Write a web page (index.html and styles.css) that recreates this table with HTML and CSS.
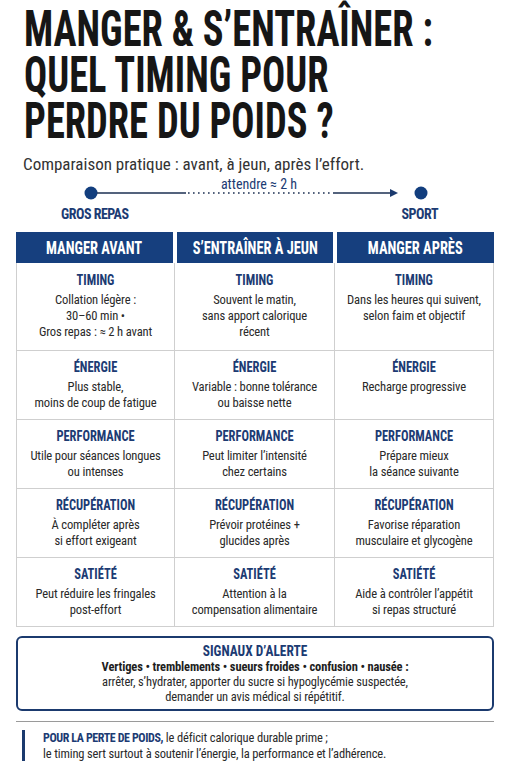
FILE: index.html
```html
<!DOCTYPE html>
<html lang="fr">
<head>
  <meta charset="UTF-8" />
  <title>Manger &amp; s’entraîner</title>
  <link rel="stylesheet" href="styles.css">
</head>
<body>

<div class="page">
  <h1 class="title">MANGER &amp; S’ENTRAÎNER :<br>QUEL TIMING POUR<br>PERDRE DU POIDS ?</h1>
  <p class="lead">Comparaison pratique : avant, à jeun, après l’effort.</p>

  <div class="timeline">
    <p class="tl-note">attendre ≈ 2 h</p>
    <svg class="tl-track" width="344" height="14" viewBox="0 0 344 14">
      <circle cx="7" cy="7" r="6.5" fill="#123e7e" />
      <line x1="13" y1="7" x2="102" y2="7" stroke="#1b2f52" stroke-width="1.6" />
      <line x1="104" y1="7" x2="248" y2="7" stroke="#1b2f52" stroke-width="1.4" stroke-dasharray="1.6 3.4" />
      <line x1="249" y1="7" x2="308" y2="7" stroke="#1b2f52" stroke-width="1.6" />
      <path d="M306 3 L314 7 L306 11 Z" fill="#1b3a6e" />
      <circle cx="337" cy="7" r="6.5" fill="#123e7e" />
    </svg>
    <div class="tl-labels">
      <span>GROS REPAS</span>
      <span>SPORT</span>
    </div>
  </div>

  <div class="compare">
    <div class="compare-head">
      <div><span>MANGER AVANT</span></div>
      <div><span>S’ENTRAÎNER À JEUN</span></div>
      <div><span>MANGER APRÈS</span></div>
    </div>
    <div class="compare-body">
      <div class="cell tall"><h3>TIMING</h3><p>Collation légère :<br>30–60 min •<br>Gros repas : ≈ 2 h avant</p></div>
      <div class="cell tall"><h3>TIMING</h3><p>Souvent le matin,<br>sans apport calorique<br>récent</p></div>
      <div class="cell tall"><h3>TIMING</h3><p>Dans les heures qui suivent,<br>selon faim et objectif</p></div>

      <div class="cell"><h3>ÉNERGIE</h3><p>Plus stable,<br>moins de coup de fatigue</p></div>
      <div class="cell"><h3>ÉNERGIE</h3><p>Variable : bonne tolérance<br>ou baisse nette</p></div>
      <div class="cell"><h3>ÉNERGIE</h3><p>Recharge progressive</p></div>

      <div class="cell"><h3>PERFORMANCE</h3><p>Utile pour séances longues<br>ou intenses</p></div>
      <div class="cell"><h3>PERFORMANCE</h3><p>Peut limiter l’intensité<br>chez certains</p></div>
      <div class="cell"><h3>PERFORMANCE</h3><p>Prépare mieux<br>la séance suivante</p></div>

      <div class="cell"><h3>RÉCUPÉRATION</h3><p>À compléter après<br>si effort exigeant</p></div>
      <div class="cell"><h3>RÉCUPÉRATION</h3><p>Prévoir protéines +<br>glucides après</p></div>
      <div class="cell"><h3>RÉCUPÉRATION</h3><p>Favorise réparation<br>musculaire et glycogène</p></div>

      <div class="cell"><h3>SATIÉTÉ</h3><p>Peut réduire les fringales<br>post-effort</p></div>
      <div class="cell"><h3>SATIÉTÉ</h3><p>Attention à la<br>compensation alimentaire</p></div>
      <div class="cell"><h3>SATIÉTÉ</h3><p>Aide à contrôler l’appétit<br>si repas structuré</p></div>
    </div>
  </div>

  <div class="alert">
    <h2>SIGNAUX D’ALERTE</h2>
    <p><strong>Vertiges • tremblements • sueurs froides • confusion • nausée :</strong><br>
    arrêter, s’hydrater, apporter du sucre si hypoglycémie suspectée,<br>
    demander un avis médical si répétitif.</p>
  </div>

  <hr class="sep">

  <p class="note"><b>POUR LA PERTE DE POIDS,</b> le déficit calorique durable prime ;<br>le timing sert surtout à soutenir l’énergie, la performance et l’adhérence.</p>
</div>

</body>
</html>
```

FILE: styles.css
```css
body {
  margin: 0;
  background: #fff;
  font-family: Roboto, Arial, sans-serif;
  font-stretch: 75%;
  font-variation-settings: "wdth" 75;
  color: #2a2a2a;
}

.page {
  padding: 0 17px 0 16px;
}

/* Titre */
.title {
  margin: 6px 0 0 8px;
  font-size: 50px;
  line-height: 46px;
  font-weight: 700;
  white-space: nowrap;
  color: #161616;
  transform: scaleX(0.77);
  transform-origin: left top;
}

.lead {
  margin: 10px 0 0 7px;
  font-size: 17px;
  line-height: 20px;
  font-stretch: 86%;
  font-variation-settings: "wdth" 86;
  color: #333;
}

/* Frise avant / après */
.timeline {
  color: #1c3b73;
}

.tl-note {
  margin: 3px 0 -5px 0;
  padding-left: 8px;
  text-align: center;
  font-size: 14px;
  line-height: 14px;
}

.tl-track {
  display: block;
  margin-left: 68px;
}

.tl-labels {
  display: flex;
  justify-content: space-between;
  margin-top: 7px;
  padding: 0 56px 0 45px;
  font-size: 14px;
  line-height: 14px;
  font-weight: 700;
  letter-spacing: -0.5px;
}

/* Tableau comparatif */
.compare {
  margin-top: 11px;
}

.compare-head {
  display: grid;
  grid-template-columns: repeat(3, 1fr);
  column-gap: 4px;
}

.compare-head div {
  background: #163f7e;
  color: #fff;
  text-align: center;
  font-size: 18px;
  line-height: 31px;
  font-weight: 700;
  white-space: nowrap;
}

.compare-head span {
  display: inline-block;
  transform: scaleX(0.8);
}

.compare-body {
  display: grid;
  grid-template-columns: 158px 160px 1fr;
  border: 1px solid #cfcfcf;
  border-top: none;
}

.cell {
  padding: 7px 4px 8px;
  text-align: center;
  border-right: 1px solid #cfcfcf;
  border-bottom: 1px solid #cfcfcf;
}

.cell:nth-child(3n) {
  border-right: none;
}

.cell:nth-last-child(-n+3) {
  border-bottom: none;
}

.cell.tall {
  padding-top: 8px;
  padding-bottom: 10px;
}

.cell h3 {
  margin: 0 0 3px;
  font-size: 15px;
  line-height: 18px;
  font-weight: 700;
  color: #1c3b73;
  transform: scaleX(0.83);
}

.cell p {
  margin: 0;
  font-size: 12.6px;
  line-height: 16px;
  letter-spacing: -0.15px;
}

/* Encadré d'alerte */
.alert {
  margin-top: 9px;
  padding: 6px 10px 5px;
  border: 2px solid #1b3a6e;
  border-radius: 6px;
  text-align: center;
}

.alert h2 {
  margin: 0;
  font-size: 15px;
  line-height: 15px;
  font-weight: 700;
  color: #1c3b73;
  transform: scaleX(0.89);
}

.alert p {
  margin: 0;
  font-size: 12.5px;
  line-height: 15px;
  letter-spacing: -0.15px;
}

.alert strong {
  color: #1e1e1e;
}

.sep {
  margin: 10px 0 0;
  border: none;
  border-top: 1px solid #9a9a9a;
}

.note {
  margin: 8px 0 0 6px;
  padding-left: 18px;
  border-left: 3px solid #1b3a6e;
  font-size: 12.5px;
  line-height: 15px;
  letter-spacing: -0.15px;
}

.note b {
  font-size: 12px;
  letter-spacing: -0.4px;
  color: #1c3b73;
}
```
